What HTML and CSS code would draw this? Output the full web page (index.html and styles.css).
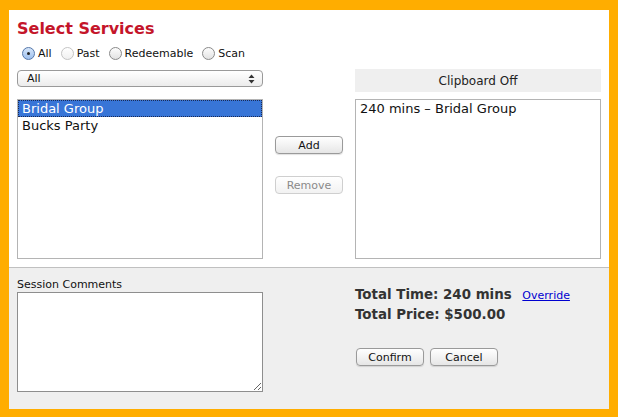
FILE: index.html
```html
<!DOCTYPE html>
<html lang="en">
<head>
  <meta charset="UTF-8">
  <title>Select Services</title>
  <link rel="stylesheet" href="styles.css">
</head>
<body>

  <div class="frame">
    <div class="top">
      <h1 class="title">Select Services</h1>

      <div class="filters">
        <label class="radio"><span class="dot on"></span>All</label>
        <label class="radio"><span class="dot faint"></span>Past</label>
        <label class="radio"><span class="dot"></span>Redeemable</label>
        <label class="radio"><span class="dot"></span>Scan</label>
      </div>

      <div class="grid">
        <div class="select">
          <span>All</span>
          <svg class="arrows" width="7" height="10" viewBox="0 0 7 10">
            <path d="M0.5 4 L3.5 0.5 L6.5 4 Z M0.5 6 L3.5 9.5 L6.5 6 Z" fill="#333"/>
          </svg>
        </div>
        <div></div>
        <div class="clipboard">Clipboard Off</div>

        <div class="list">
          <div class="item selected">Bridal Group</div>
          <div class="item">Bucks Party</div>
        </div>
        <div class="actions">
          <button class="btn">Add</button>
          <button class="btn" disabled>Remove</button>
        </div>
        <div class="list">
          <div class="item">240 mins &ndash; Bridal Group</div>
        </div>
      </div>
    </div>

    <div class="bottom">
      <div class="comments">
        <label for="comments">Session Comments</label>
        <textarea id="comments"></textarea>
      </div>
      <div></div>
      <div class="totals">
        <div class="total">Total Time: 240 mins <a href="#" class="override">Override</a></div>
        <div class="total">Total Price: $500.00</div>
        <div class="buttons">
          <button class="btn">Confirm</button>
          <button class="btn">Cancel</button>
        </div>
      </div>
    </div>
  </div>

</body>
</html>
```

FILE: styles.css
```css
* {
  box-sizing: border-box;
}

body {
  margin: 0;
  font-family: "DejaVu Sans", Verdana, sans-serif;
  background-color: #ffad00;
}

.frame {
  width: 618px;
  height: 417px;
  border-style: solid;
  border-color: #ffad00;
  border-width: 10px 9px 8px 9px;
  display: flex;
  flex-direction: column;
}

.top {
  background-color: white;
  padding: 9px 8px 8px 8px;
  border-bottom: 1px solid #c0c0c0;
}

.title {
  margin: 0;
  font-size: 16px;
  line-height: 20px;
  font-weight: bold;
  color: #c4152a;
}

.filters {
  display: flex;
  align-items: center;
  gap: 4px;
  height: 14px;
  margin-top: 7px;
  font-size: 11px;
  color: #111;
}

.radio {
  display: flex;
  align-items: center;
}

.dot {
  width: 13px;
  height: 13px;
  margin: 0 3px 0 5px;
  border-radius: 50%;
  border: 1px solid #8a8a8a;
  background: linear-gradient(#fdfdfd, #e2e2e2);
  position: relative;
}

.dot.faint {
  border-color: #c4c4c4;
  background: linear-gradient(#ffffff, #f0f0f0);
}

.dot.on {
  border-color: #5577aa;
  background: linear-gradient(#d6e6fa, #9ec0ee);
}

.dot.on::after {
  content: "";
  position: absolute;
  left: 4px;
  top: 4px;
  width: 3px;
  height: 3px;
  border-radius: 50%;
  background-color: #222;
}

.grid {
  display: grid;
  grid-template-columns: 246px 68px 246px;
  column-gap: 12px;
  margin-top: 9px;
}

.select {
  height: 17px;
  margin-top: 1px;
  padding: 0 7px 0 9px;
  border: 1px solid #9a9a9a;
  border-radius: 4px;
  background: linear-gradient(#ffffff, #ececec);
  display: flex;
  align-items: center;
  justify-content: space-between;
  font-size: 11px;
  color: #111;
}

.clipboard {
  height: 23px;
  background-color: #efefef;
  display: flex;
  align-items: center;
  justify-content: center;
  font-size: 12px;
  color: #222;
}

.list {
  grid-row: 2;
  margin-top: 7px;
  height: 160px;
  border: 1px solid #b4b4b4;
  font-size: 13px;
  line-height: 15px;
  color: #111;
}

.list:last-child {
  grid-column: 3;
}

.item {
  padding-left: 3px;
  border: 1px solid transparent;
  white-space: nowrap;
}

.item.selected {
  background-color: #3875d7;
  color: white;
  border: 1px dotted #1a2a55;
}

.actions {
  grid-row: 2;
  grid-column: 2;
  margin-top: 7px;
  padding-top: 37px;
  display: flex;
  flex-direction: column;
  gap: 22px;
}

.btn {
  height: 18px;
  width: 68px;
  padding: 0;
  font-family: "DejaVu Sans", Verdana, sans-serif;
  font-size: 11px;
  color: #111;
  border: 1px solid #9a9a9a;
  border-radius: 4px;
  background: linear-gradient(#ffffff, #e6e6e6);
  box-shadow: 0 1px 1px rgba(0,0,0,0.12);
}

.btn:disabled {
  color: #8a8a8a;
  border-color: #cfcfcf;
  background: linear-gradient(#ffffff, #f2f2f2);
  box-shadow: none;
}

.bottom {
  flex: 1;
  background-color: #efefef;
  padding: 10px 8px 0 8px;
  display: grid;
  grid-template-columns: 246px 92px 246px;
}

.comments label {
  display: block;
  font-size: 11px;
  line-height: 13px;
  color: #111;
}

.comments textarea {
  display: block;
  width: 246px;
  height: 100px;
  margin-top: 1px;
  border: 1px solid #8e8e8e;
  background-color: white;
}

.totals {
  padding-top: 7px;
}

.total {
  font-size: 13.4px;
  line-height: 19px;
  font-weight: bold;
  color: #333;
}

.override {
  margin-left: 6px;
  font-size: 11px;
  font-weight: normal;
  color: #0000d0;
}

.buttons {
  display: flex;
  gap: 6px;
  margin-top: 24px;
  padding-left: 1px;
}
```
